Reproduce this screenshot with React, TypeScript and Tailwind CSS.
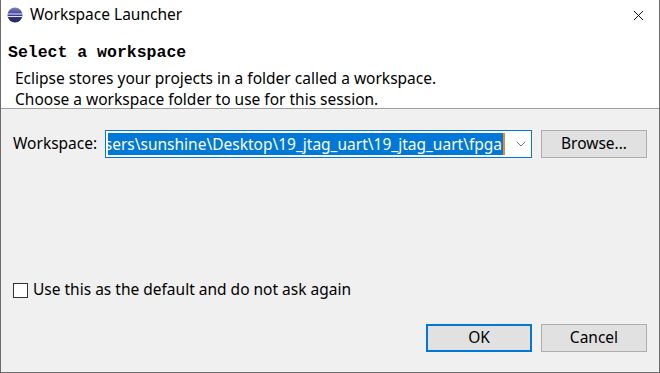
import { ChevronDown, X } from "lucide-react";

const ui = { fontFamily: '"Noto Sans", "Segoe UI", sans-serif' };

function EclipseIcon() {
  return (
    <svg width="16" height="16" viewBox="0 0 16 16">
      <defs>
        <linearGradient id="ec" x1="0" y1="0" x2="0" y2="1">
          <stop offset="0" stopColor="#7b7fc4" />
          <stop offset="0.5" stopColor="#3a3d8f" />
          <stop offset="1" stopColor="#23265f" />
        </linearGradient>
      </defs>
      <circle cx="8" cy="8" r="7.5" fill="url(#ec)" />
      <rect x="0.5" y="6.5" width="15" height="1" fill="#e8e8f4" />
      <rect x="0.8" y="9" width="14.4" height="1" fill="#e8e8f4" />
    </svg>
  );
}

export default function App() {
  return (
    <div
      className="w-[660px] h-[373px] bg-[#f0f0f0] border-x border-b border-[#6b6b6b] flex flex-col text-[15.5px] text-black overflow-hidden"
      style={ui}
    >
      {/* title bar */}
      <div className="h-[30px] bg-white flex items-center pl-[6px] shrink-0">
        <EclipseIcon />
        <span className="ml-[7px] leading-none">Workspace Launcher</span>
        <X className="ml-auto mr-[12px] w-[17px] h-[17px]" strokeWidth={1.3} />
      </div>

      {/* header */}
      <div className="h-[79px] bg-white border-b border-[#a0a0a0] shrink-0 pt-[12px]">
        <div
          className="pl-[7px] font-bold text-[16.5px] leading-[22px]"
          style={{ fontFamily: '"Liberation Mono", monospace' }}
        >
          Select a workspace
        </div>
        <div className="pl-[14px] mt-[4px] leading-[21px]">
          <div>Eclipse stores your projects in a folder called a workspace.</div>
          <div>Choose a workspace folder to use for this session.</div>
        </div>
      </div>

      {/* workspace row */}
      <div className="flex items-center mt-[21px] pl-[12px] h-[28px]">
        <span className="w-[92px] whitespace-nowrap">Workspace:</span>
        <div className="w-[427px] h-[28px] bg-white border border-[#0078d7] flex items-center pl-[2px] pr-[2px]">
          <div className="flex-1 h-[22px] overflow-hidden flex justify-end">
            <span className="bg-[#0078d7] text-white leading-[22px] whitespace-nowrap pr-[1px] border-r-2 border-[#f08a24]">
              C:\Users\sunshine\Desktop\19_jtag_uart\19_jtag_uart\fpga
            </span>
          </div>
          <ChevronDown className="w-[16px] h-[16px] ml-[8px] text-[#606060]" strokeWidth={1.3} />
        </div>
        <button className="ml-[9px] w-[106px] h-[28px] bg-[#e1e1e1] border border-[#adadad]">
          Browse...
        </button>
      </div>

      <div className="flex-1" />

      {/* checkbox */}
      <label className="flex items-center pl-[12px] gap-[5px] h-[18px]">
        <span className="w-[15px] h-[15px] bg-white border border-[#333]" />
        <span>Use this as the default and do not ask again</span>
      </label>

      {/* buttons */}
      <div className="flex justify-end gap-[9px] pr-[12px] mt-[25px] mb-[20px]">
        <button className="w-[106px] h-[28px] bg-[#e1e1e1] border-2 border-[#0078d7]">OK</button>
        <button className="w-[106px] h-[28px] bg-[#e1e1e1] border border-[#adadad]">Cancel</button>
      </div>
    </div>
  );
}
